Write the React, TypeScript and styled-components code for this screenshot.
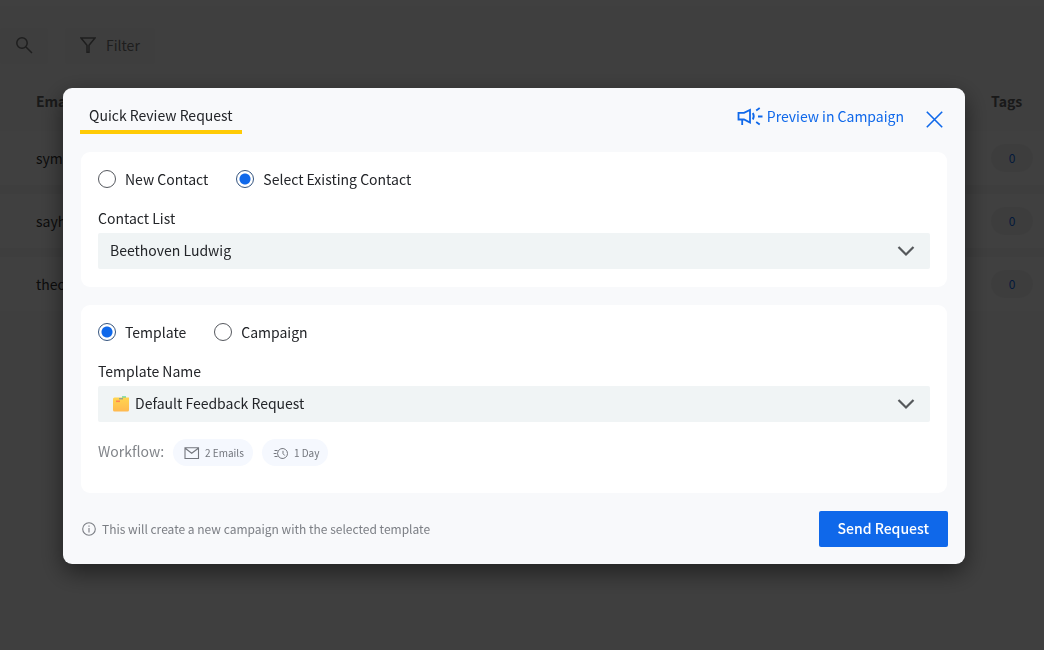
import React, { useState } from "react";
import styled, { createGlobalStyle } from "styled-components";

const blue = "#0f68ea";

const GlobalStyle = createGlobalStyle`
  *, *::before, *::after { box-sizing: border-box; }
  body {
    margin: 0;
    background: #fafafa;
    color: #222428;
    font-family: "Noto Sans CJK SC", "Noto Sans", sans-serif;
    font-size: 14px;
    line-height: 20px;
  }
  button, select, input { font: inherit; color: inherit; }
`;

const Page = styled.main`
  min-height: 100vh;
  border-top: 6px solid #ffffff;
`;

const Toolbar = styled.div`
  display: flex;
  gap: 17px;
  padding: 22px 0;
`;

const ToolButton = styled.button`
  display: flex;
  align-items: center;
  gap: 10px;
  height: 36px;
  padding: 0 15px 2px;
  border: 0;
  border-radius: 4px;
  background: #f5f5f5;
  color: #777777;
`;

const ContactTable = styled.table`
  width: 100%;
  border-spacing: 0;
  text-align: left;

  th, td { padding: 0 11px 0 36px; }
  th { height: 45px; padding-bottom: 16px; font-weight: 700; color: #666666; }
  td { height: 63px; border-bottom: 9px solid #f6f6f6; background: #fefefe; color: #333333; }
  th:last-child, td:last-child { width: 89px; }
  tr:last-child td { height: 54px; border-bottom: 0; }
`;

const CountBadge = styled.span`
  display: block;
  width: 42px;
  border-radius: 14px;
  background: #f4f4f4;
  color: ${blue};
  font-size: 12px;
  line-height: 28px;
  text-align: center;
`;

const Overlay = styled.div`
  position: fixed;
  inset: 0;
  display: flex;
  align-items: center;
  justify-content: center;
  padding: 18px 79px 16px 63px;
  background: rgba(0, 0, 0, 0.75);
`;

const Dialog = styled.section`
  width: 100%;
  padding: 16px 17px 17px;
  border-radius: 9px;
  background: #f8f9fb;
  box-shadow: 0 8px 24px rgba(0, 0, 0, 0.5);
`;

const DialogHeader = styled.header`
  display: flex;
  align-items: flex-start;
  justify-content: space-between;
  margin-bottom: 18px;
`;

const DialogTitle = styled.h1`
  margin: 0;
  padding: 1px 9px 5px;
  border-bottom: 4px solid #ffcb05;
  font-size: 14px;
  font-weight: 400;
  line-height: 20px;
`;

const HeaderActions = styled.div`
  display: flex;
  align-items: flex-start;
  gap: 22px;
  padding: 2px 5px 0 0;
`;

const PreviewLink = styled.a`
  display: flex;
  align-items: center;
  gap: 4px;
  color: ${blue};
  text-decoration: none;
`;

const CloseButton = styled.button`
  display: flex;
  padding: 5px 0 0;
  border: 0;
  background: none;
  color: ${blue};
`;

const Card = styled.div<{ $roomy?: boolean }>`
  margin: 0 1px 18px;
  padding: 17px 17px ${(p) => (p.$roomy ? 27 : 18)}px;
  border-radius: 9px;
  background: #ffffff;
`;

const RadioGroup = styled.div`
  display: flex;
  gap: 28px;
  margin-bottom: 19px;
`;

const RadioLabel = styled.label`
  display: flex;
  align-items: center;
  gap: 9px;
`;

const Radio = styled.input`
  appearance: none;
  width: 18px;
  height: 18px;
  margin: 0;
  border: 1px solid #55585e;
  border-radius: 50%;

  &:checked {
    border-color: #35557f;
    background: radial-gradient(circle, ${blue} 5px, transparent 6px);
  }
`;

const FieldLabel = styled.label`
  display: block;
  margin-bottom: 5px;
`;

const SelectBox = styled.div`
  display: grid;
  align-items: center;

  > * { grid-area: 1 / 1; }
  > svg { pointer-events: none; }
  > svg:last-child { justify-self: end; margin-right: 15px; }
`;

const Select = styled.select<{ $withIcon?: boolean }>`
  appearance: none;
  width: 100%;
  height: 36px;
  padding: 0 44px 2px ${(p) => (p.$withIcon ? 37 : 12)}px;
  border: 0;
  border-radius: 2px;
  background: #f0f4f5;
`;

const Workflow = styled.div`
  display: flex;
  align-items: flex-start;
  gap: 9px;
  margin-top: 17px;
  color: #82858a;
  line-height: 24px;
`;

const Chip = styled.span`
  display: flex;
  align-items: center;
  gap: 5px;
  height: 27px;
  padding: 0 9px 0 11px;
  border-radius: 14px;
  background: #f5f8fe;
  color: #73767d;
  font-size: 10px;
`;

const DialogFooter = styled.footer`
  display: flex;
  align-items: center;
  justify-content: space-between;
`;

const Note = styled.p`
  display: flex;
  align-items: center;
  gap: 6px;
  margin: 0;
  padding-left: 2px;
  color: #7b7e84;
  font-size: 12px;
`;

const SendButton = styled.button`
  height: 36px;
  padding: 0 19px 2px;
  border: 0;
  border-radius: 2px;
  background: ${blue};
  color: #ffffff;
  font-weight: 500;
`;

const stroke = { fill: "none", stroke: "currentColor", "aria-hidden": true } as const;

const SearchIcon = () => (
  <svg width="18" height="18" viewBox="0 0 18 18" strokeWidth="1.5" {...stroke}>
    <circle cx="7" cy="7" r="5.2" />
    <path d="M11 11l6 6" />
  </svg>
);

const FilterIcon = () => (
  <svg width="16" height="18" viewBox="0 0 16 18" strokeWidth="1.5" {...stroke}>
    <path d="M1 2h14L9 9.300v7H7v-7z" />
  </svg>
);

const MegaphoneIcon = () => (
  <svg width="26" height="20" viewBox="0 0 26 20" strokeWidth="1.8" {...stroke}>
    <path d="M1.500 6.800h5.500L13 4v12.500L7 13.500H1.500zM5.200 13.500V19M15.800 7c1.200 2 1.200 4.500 0 6.500M19.200 4.500l3.500-2.500M21 10.500h4.500M19.200 16l3.500 2.500" />
  </svg>
);

const CloseIcon = () => (
  <svg width="17" height="17" viewBox="0 0 17 17" strokeWidth="1.6" {...stroke}>
    <path d="M.8.8l15.400 15.400M16.200.8L.8 16.200" />
  </svg>
);

const ChevronIcon = () => (
  <svg width="18" height="12" viewBox="0 0 18 12" strokeWidth="2.200" color="#55585b" {...stroke}>
    <path d="M1.500 2l7.500 7.500L16.500 2" />
  </svg>
);

const Folder = styled.svg`
  margin-left: 15px;
`;

const FolderIcon = () => (
  <Folder width="16" height="16" viewBox="0 0 16 16" aria-hidden>
    <defs>
      <linearGradient id="folder" x1="0" y1="0" x2="0" y2="1">
        <stop offset="0" stopColor="#ffd54f" />
        <stop offset="1" stopColor="#ffb950" />
      </linearGradient>
    </defs>
    <path d="M9 .3h4v2H9z" fill="#5fd69a" />
    <path d="M1.500 1.500h14.500v12.500a1.500 1.500 0 0 1-1.500 1.500h-13A1.500 1.500 0 0 1 0 14V3a1.500 1.500 0 0 1 1.500-1.500z" fill="url(#folder)" />
    <path d="M6 2.300h4v1H6z" fill="#6d93a8" />
    <path d="M3 4.500h4v1.600H3z" fill="#ff8452" />
  </Folder>
);

const MailIcon = () => (
  <svg width="16" height="14" viewBox="0 0 16 14" strokeWidth="1.100" {...stroke}>
    <path d="M1 1.800h13.500v10.700H1zM1.500 2.500L7.700 7.300l6.300-4.800" />
  </svg>
);

const ClockIcon = () => (
  <svg width="16" height="14" viewBox="0 0 16 14" strokeWidth="1" {...stroke}>
    <path d="M7.800 2.800a5 5 0 1 1 0 9.400A5 5 0 0 1 7.800 2.800zM10 4.800v2.800l1.700 1.900M1.500 4.500h3M.7 7.500H3.500M1.500 10.500h3" />
  </svg>
);

const InfoIcon = () => (
  <svg width="14" height="14" viewBox="0 0 14 14" strokeWidth="1.100" {...stroke}>
    <circle cx="7" cy="7" r="6.300" />
    <path d="M7 6v4.500M7 3.500v1.300" />
  </svg>
);

const emails = ["sym", "sayh", "theo"];

export default function App() {
  const [contact, setContact] = useState("existing");
  const [source, setSource] = useState("template");

  const radio = (group: string, value: string, label: string, current: string, set: (v: string) => void) => (
    <RadioLabel>
      <Radio type="radio" name={group} value={value} checked={current === value} onChange={() => set(value)} />
      {label}
    </RadioLabel>
  );

  return (
    <>
      <GlobalStyle />
      <Page>
        <Toolbar>
          <ToolButton aria-label="Search"><SearchIcon /></ToolButton>
          <ToolButton><FilterIcon />Filter</ToolButton>
        </Toolbar>
        <ContactTable>
          <thead>
            <tr><th>Email</th><th>Tags</th></tr>
          </thead>
          <tbody>
            {emails.map((email) => (
              <tr key={email}>
                <td>{email}</td>
                <td><CountBadge>0</CountBadge></td>
              </tr>
            ))}
          </tbody>
        </ContactTable>
      </Page>

      <Overlay>
        <Dialog role="dialog" aria-modal="true" aria-labelledby="dialog-title">
          <DialogHeader>
            <DialogTitle id="dialog-title">Quick Review Request</DialogTitle>
            <HeaderActions>
              <PreviewLink href="#preview"><MegaphoneIcon />Preview in Campaign</PreviewLink>
              <CloseButton aria-label="Close"><CloseIcon /></CloseButton>
            </HeaderActions>
          </DialogHeader>

          <Card>
            <RadioGroup>
              {radio("contact", "new", "New Contact", contact, setContact)}
              {radio("contact", "existing", "Select Existing Contact", contact, setContact)}
            </RadioGroup>
            <FieldLabel htmlFor="contact-list">Contact List</FieldLabel>
            <SelectBox>
              <Select id="contact-list"><option>Beethoven Ludwig</option></Select>
              <ChevronIcon />
            </SelectBox>
          </Card>

          <Card $roomy>
            <RadioGroup>
              {radio("source", "template", "Template", source, setSource)}
              {radio("source", "campaign", "Campaign", source, setSource)}
            </RadioGroup>
            <FieldLabel htmlFor="template-name">Template Name</FieldLabel>
            <SelectBox>
              <Select id="template-name" $withIcon><option>Default Feedback Request</option></Select>
              <FolderIcon />
              <ChevronIcon />
            </SelectBox>
            <Workflow>
              Workflow:
              <Chip><MailIcon />2 Emails</Chip>
              <Chip><ClockIcon />1 Day</Chip>
            </Workflow>
          </Card>

          <DialogFooter>
            <Note><InfoIcon />This will create a new campaign with the selected template</Note>
            <SendButton>Send Request</SendButton>
          </DialogFooter>
        </Dialog>
      </Overlay>
    </>
  );
}
